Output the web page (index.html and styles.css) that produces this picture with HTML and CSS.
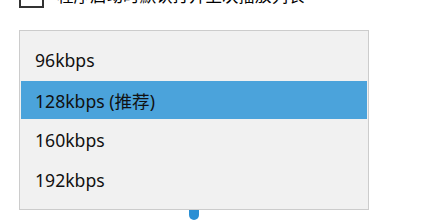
FILE: index.html
```html
<!DOCTYPE html>
<html>
<head>
<meta charset="utf-8">
<link rel="stylesheet" href="styles.css">
</head>
<body>
<div class="option">
  <span class="checkbox"></span>
  <span class="option-label">程序启动时默认打开上次播放列表</span>
</div>
<div class="dropdown">
  <div class="item">96kbps</div>
  <div class="item selected">128kbps (推荐)</div>
  <div class="item">160kbps</div>
  <div class="item">192kbps</div>
</div>
<div class="slider"><span class="thumb"></span></div>
</body>
</html>
```
FILE: styles.css
```css
html, body {
  margin: 0;
  padding: 0;
  background: #ffffff;
  overflow: hidden;
}
body {
  width: 426px;
  height: 224px;
  font-family: "Noto Sans", "Noto Sans CJK SC", sans-serif;
  color: #000000;
}
.option {
  display: flex;
  align-items: center;
  gap: 13px;
  margin-top: -17px;
  padding-left: 19px;
  height: 25px;
}
.checkbox {
  box-sizing: border-box;
  width: 25px;
  height: 25px;
  border: 2px solid #333333;
  background: #ffffff;
  flex: none;
}
.option-label {
  font-size: 16.5px;
  line-height: 25px;
  white-space: nowrap;
  font-family: "Noto Sans CJK SC", sans-serif;
}
.dropdown {
  position: relative;
  z-index: 1;
  box-sizing: border-box;
  width: 350px;
  margin: 22px 0 0 19px;
  padding: 10px 1px;
  display: flex;
  flex-direction: column;
  gap: 2px;
  background: #f1f1f1;
  border: 1px solid #cccccc;
}
.item {
  height: 38px;
  padding-left: 14px;
  display: flex;
  align-items: center;
  font-size: 17.6px;
  white-space: nowrap;
  color: #111111;
}
.item.selected {
  background: #4ba3db;
}
.slider {
  margin-left: 189px;
  margin-top: -10px;
}
.thumb {
  display: block;
  width: 10px;
  height: 20px;
  background: #2a8fd4;
  border-radius: 0 0 5px 5px;
}
```
